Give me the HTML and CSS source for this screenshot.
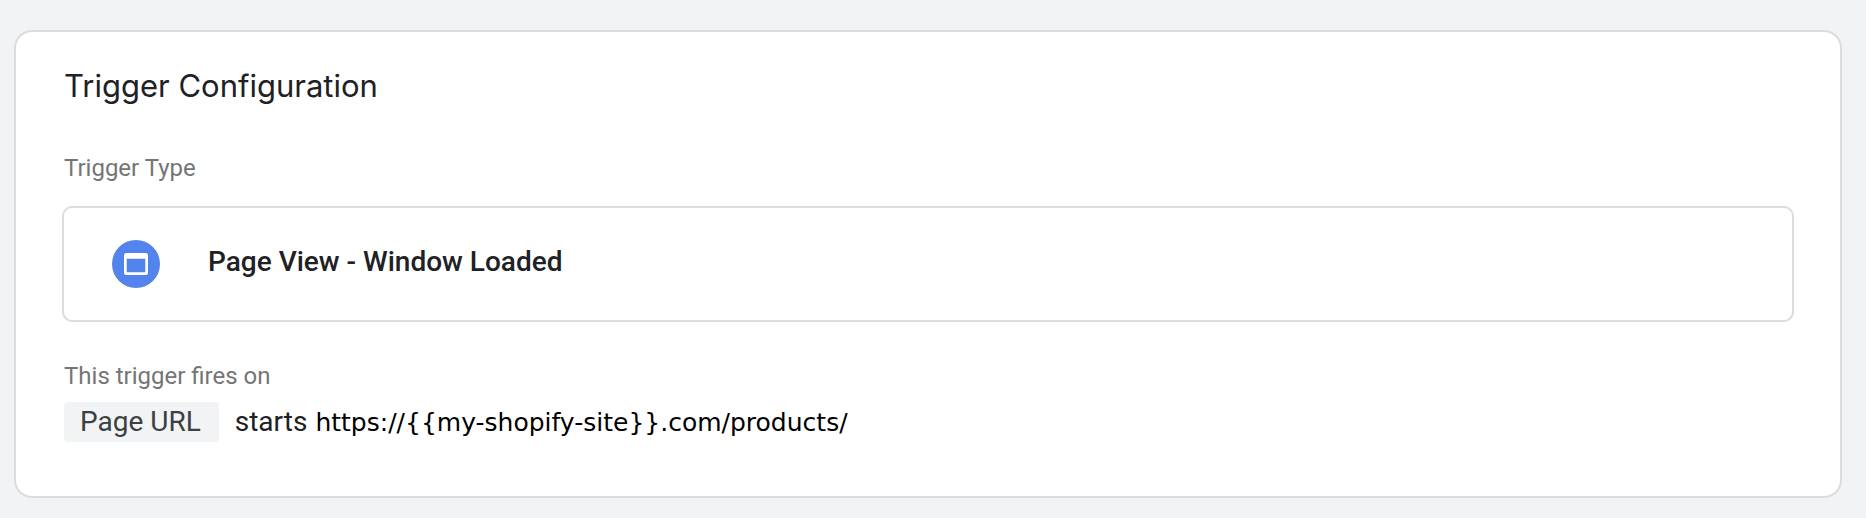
FILE: index.html
```html
<!DOCTYPE html>
<html lang="en">
<head>
<meta charset="utf-8">
<title>Trigger Configuration</title>
<link rel="stylesheet" href="styles.css">
</head>
<body>
<main class="card">
  <h1 class="card-title">Trigger Configuration</h1>
  <h2 class="label">Trigger Type</h2>
  <section class="type-box">
    <svg class="type-icon" viewBox="0 0 48 48" aria-hidden="true">
      <circle cx="24" cy="24" r="24" fill="#5383ec"/>
      <path fill="#fff" fill-rule="evenodd" d="M14.500 13h19a2.500 2.500 0 0 1 2.500 2.500v17a2.500 2.500 0 0 1-2.500 2.500h-19a2.500 2.500 0 0 1-2.500-2.500v-17a2.500 2.500 0 0 1 2.500-2.500zm.2 5.700v13.600h18.600V18.700z"/>
    </svg>
    <span class="type-name">Page View - Window Loaded</span>
  </section>
  <h2 class="label label-fires">This trigger fires on</h2>
  <p class="condition"><span class="chip">Page URL</span><span class="operator">starts</span><span class="url">https://{{my-shopify-site}}.com/products/</span></p>
</main>
</body>
</html>
```
FILE: styles.css
```css
* {
  box-sizing: border-box;
}

body {
  margin: 0;
  padding: 30px 24px 20px 14px;
  background: #f1f3f5;
  font-family: Roboto, sans-serif;
  color: #202124;
}

.card {
  padding: 32px 46px 53px;
  background: #fff;
  border: 2px solid #dadce0;
  border-radius: 18px;
}

.card-title {
  margin: 0 2px 44px;
  font-family: Inter, sans-serif;
  font-size: 31px;
  font-weight: 400;
  line-height: 44px;
}

.label {
  margin: 0 2px 22px;
  font-size: 24px;
  font-weight: 400;
  line-height: 32px;
  color: #757575;
}

.type-box {
  display: flex;
  align-items: center;
  gap: 48px;
  padding: 32px 48px;
  border: 2px solid #dadce0;
  border-radius: 10px;
}

.type-icon {
  width: 48px;
  height: 48px;
}

.type-name {
  font-size: 28px;
  font-weight: 500;
  line-height: 44px;
  padding-bottom: 4px;
}

.label-fires {
  margin: 38px 2px 10px;
}

.condition {
  display: flex;
  align-items: baseline;
  margin: 0 2px;
  font-size: 28px;
  line-height: 40px;
}

.chip {
  padding: 0 18px 0 16px;
  border-radius: 4px;
  background: #f1f3f4;
  color: #3c4043;
}

.operator {
  margin: 0 8px 0 16px;
}

.url {
  font-family: "DejaVu Sans", sans-serif;
  font-size: 25px;
  font-weight: 400;
  color: #000;
}
```
